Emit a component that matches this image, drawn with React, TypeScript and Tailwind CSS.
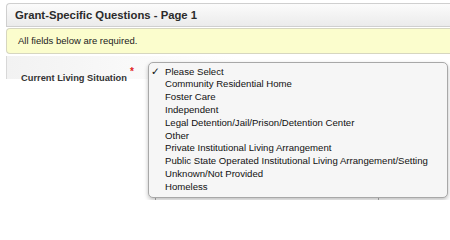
import React from "react";

const options = [
  "Please Select",
  "Community Residential Home",
  "Foster Care",
  "Independent",
  "Legal Detention/Jail/Prison/Detention Center",
  "Other",
  "Private Institutional Living Arrangement",
  "Public State Operated Institutional Living Arrangement/Setting",
  "Unknown/Not Provided",
  "Homeless",
];

export default function App() {
  return (
    <div className="relative w-[450px] h-[200px] overflow-hidden bg-white font-['Liberation_Sans',Arial,sans-serif]">
      <div className="pt-[3px] pl-[6px]">
        <div className="h-[24px] w-[460px] rounded-tl-[4px] border border-r-0 border-[#cfcfcf] bg-gradient-to-b from-[#fbfbfb] to-[#ebebeb] pl-[8px] flex items-center">
          <span className="text-[11.3px] font-bold text-[#2b2b2b]">Grant-Specific Questions - Page 1</span>
        </div>
        <div className="mt-[1px] h-[26px] w-[460px] rounded-l-[4px] border border-r-0 border-[#d6d6c0] bg-[#fbfdcd] pl-[11px] flex items-center">
          <span className="text-[9.5px] text-[#222]">All fields below are required.</span>
        </div>
        <div className="mt-[2px] h-[23px] w-[460px] border-l border-[#d8d8d8] bg-gradient-to-r from-[#f2f2f2] via-white to-white pl-[14px] pt-[8px]">
          <span className="relative text-[9.3px] font-bold text-[#333]">
            Current Living Situation
            <span className="absolute -right-[7px] -top-[9px] text-[10px] font-bold text-[#e02020]">*</span>
          </span>
        </div>
        <div className="mt-[112px] ml-[149px] h-[20px] w-[224px] border border-[#b0b0b0]" />
      </div>

      <div className="absolute left-[148px] top-[62px] w-[300px] h-[136px] rounded-[5px] border border-[#a8a8a8] bg-[#f6f6f6] shadow-[0_2px_4px_rgba(0,0,0,0.25)] pt-[2px]">
        {options.map((o, i) => (
          <div key={o} className="flex h-[12.8px] items-center text-[9.6px] leading-none text-[#111]">
            <span className="w-[16px] pl-[2px] text-[10.5px] font-bold font-['DejaVu_Sans',sans-serif]">{i === 0 ? "✓" : ""}</span>
            <span>{o}</span>
          </div>
        ))}
      </div>
    </div>
  );
}
